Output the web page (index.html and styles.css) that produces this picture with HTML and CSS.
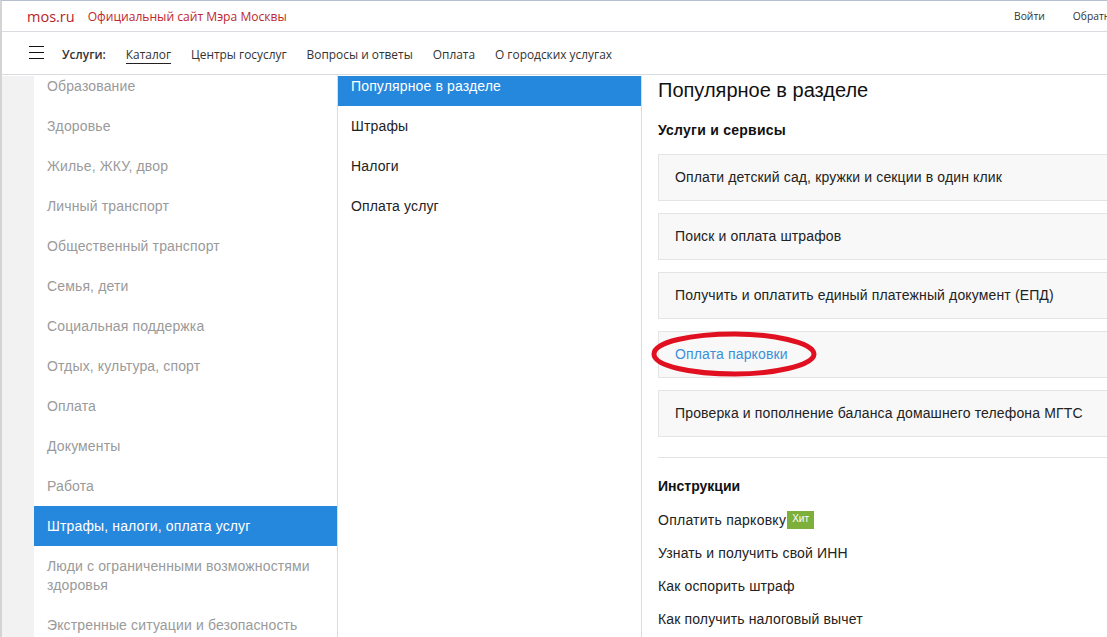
FILE: index.html
```html
<!DOCTYPE html>
<html lang="ru">
<head>
    <meta charset="UTF-8">
    <title>Популярное в разделе</title>
    <link rel="stylesheet" href="styles.css">
</head>
<body>
    <div class="top-bar">
        <a class="logo">mos.ru</a>
        <span class="site-title">Официальный сайт Мэра Москвы</span>
        <div class="top-links">
            <a>Войти</a>
            <a>Обратная связь</a>
        </div>
    </div>

    <div class="nav-bar">
        <div class="burger"><span></span><span></span><span></span></div>
        <strong class="nav-label">Услуги:</strong>
        <a class="nav-link active">Каталог</a>
        <a class="nav-link">Центры госуслуг</a>
        <a class="nav-link">Вопросы и ответы</a>
        <a class="nav-link">Оплата</a>
        <a class="nav-link">О городских услугах</a>
    </div>

    <div class="main">
        <div class="col-strip"></div>

        <ul class="menu menu-first">
            <li>Образование</li>
            <li>Здоровье</li>
            <li>Жилье, ЖКУ, двор</li>
            <li>Личный транспорт</li>
            <li>Общественный транспорт</li>
            <li>Семья, дети</li>
            <li>Социальная поддержка</li>
            <li>Отдых, культура, спорт</li>
            <li>Оплата</li>
            <li>Документы</li>
            <li>Работа</li>
            <li class="active">Штрафы, налоги, оплата услуг</li>
            <li class="two-lines">Люди с ограниченными возможностями здоровья</li>
            <li>Экстренные ситуации и безопасность</li>
        </ul>

        <ul class="menu menu-second">
            <li class="active">Популярное в разделе</li>
            <li>Штрафы</li>
            <li>Налоги</li>
            <li>Оплата услуг</li>
        </ul>

        <div class="content">
            <h1>Популярное в разделе</h1>
            <h2>Услуги и сервисы</h2>
            <div class="cards">
                <div class="card">Оплати детский сад, кружки и секции в один клик</div>
                <div class="card">Поиск и оплата штрафов</div>
                <div class="card">Получить и оплатить единый платежный документ (ЕПД)</div>
                <div class="card link">
                    Оплата парковки
                    <svg class="mark" width="170" height="48" viewBox="0 0 170 48">
                        <path d="M84 4 C120 4 162 12 163 24 C163 36 120 44 84 44 C40 44 3 36 3 24 C3 12 40 4 84 4 Z"/>
                    </svg>
                </div>
                <div class="card">Проверка и пополнение баланса домашнего телефона МГТС</div>
            </div>
            <hr>
            <h2 class="howto-title">Инструкции</h2>
            <ul class="howto">
                <li><span class="howto-first">Оплатить парковку</span> <span class="badge">Хит</span></li>
                <li>Узнать и получить свой ИНН</li>
                <li>Как оспорить штраф</li>
                <li>Как получить налоговый вычет</li>
            </ul>
        </div>
    </div>
</body>
</html>
```

FILE: styles.css
```css
* {
    margin: 0;
    padding: 0;
    box-sizing: border-box;
}

html, body {
    height: 637px;
    overflow: hidden;
}

body {
    font-family: "Liberation Sans", Arial, sans-serif;
    font-size: 14px;
    letter-spacing: 0.14px;
    color: #222;
    background: white;
    border-top: 1px solid #b4c0d0;
    border-left: 2px solid #d4d4d4;
}

ul {
    list-style: none;
}

.top-bar {
    display: flex;
    align-items: center;
    height: 31px;
    padding-left: 25px;
    border-bottom: 1px solid #d8dce0;
    font-family: "Open Sans", sans-serif;
    letter-spacing: 0;
    white-space: nowrap;
}

.logo {
    color: #b5222c;
    font-size: 14.5px;
    margin-right: 13px;
}

.site-title {
    color: #c0272d;
    font-size: 12.1px;
}

.top-links {
    display: flex;
    gap: 28px;
    margin-left: auto;
    margin-right: -45px;
    font-size: 10.3px;
    color: #333;
}

.nav-bar {
    display: flex;
    align-items: center;
    height: 43px;
    padding-left: 27px;
    padding-top: 2px;
    border-bottom: 1px solid #d8dce0;
    font-family: "Open Sans", sans-serif;
    font-size: 11.9px;
    letter-spacing: 0;
    color: #333;
    white-space: nowrap;
}

.burger {
    display: flex;
    flex-direction: column;
    gap: 5px;
    width: 15px;
    margin-right: 18px;
    margin-top: -4px;
}

.burger span {
    height: 1px;
    background: #111;
}

.nav-label {
    margin-right: 20px;
    font-weight: 600;
}

.nav-link {
    margin-right: 20px;
    line-height: 17px;
    border-bottom: 1px solid transparent;
    padding-top: 2px;
}

.nav-link.active {
    border-bottom-color: #222;
}

.main {
    display: flex;
    height: 562px;
    padding-top: 1px;
    overflow: hidden;
}

.col-strip {
    width: 32px;
    flex: none;
    background: #f2f2f2;
}

.menu {
    flex: none;
    color: #9a9a9a;
    line-height: 20px;
}

.menu li {
    padding: 10px 13px;
}

.menu li.active {
    background: #2688dc;
    color: white;
}

.menu-first {
    width: 304px;
    margin-top: -10px;
    border-right: 1px solid #dcdcdc;
}

.menu-first li.two-lines {
    line-height: 19px;
    padding: 11px 13px 10px;
}

.menu-second {
    width: 304px;
    color: #222;
    border-right: 1px solid #dcdcdc;
}

.menu-second li {
    height: 40px;
}

.menu-second li.active {
    height: 30px;
    padding-top: 0;
}

.content {
    flex: none;
    width: 500px;
    padding-left: 16px;
    color: #222;
}

h1 {
    font-size: 20px;
    font-weight: normal;
    letter-spacing: 0;
    color: #111;
    line-height: 28px;
}

h2 {
    font-size: 14px;
    font-weight: bold;
    letter-spacing: 0.25px;
    color: #111;
    line-height: 20px;
    margin-top: 16px;
    margin-bottom: 14px;
}

.cards {
    display: flex;
    flex-direction: column;
    gap: 12px;
}

.card {
    position: relative;
    height: 47px;
    line-height: 45px;
    padding-left: 16px;
    background: #f8f8f8;
    border: 1px solid #e4e4e4;
}

.card.link {
    color: #3a90d8;
}

.mark {
    position: absolute;
    left: -8px;
    top: -2px;
    fill: none;
    stroke: #e01020;
    stroke-width: 5;
}

hr {
    border: none;
    border-top: 1px solid #e4e4e4;
    margin-top: 20px;
}

h2.howto-title {
    letter-spacing: 0;
    margin-top: 18px;
    margin-bottom: 14px;
}

.howto li {
    height: 33px;
    line-height: 20px;
}

.howto-first {
    letter-spacing: 0.25px;
}

.badge {
    display: inline-block;
    height: 18px;
    padding: 0 5px;
    line-height: 16px;
    vertical-align: 3px;
    margin-left: -3px;
    background: #7cb03a;
    color: white;
    font-size: 10px;
    letter-spacing: 0;
}
```
